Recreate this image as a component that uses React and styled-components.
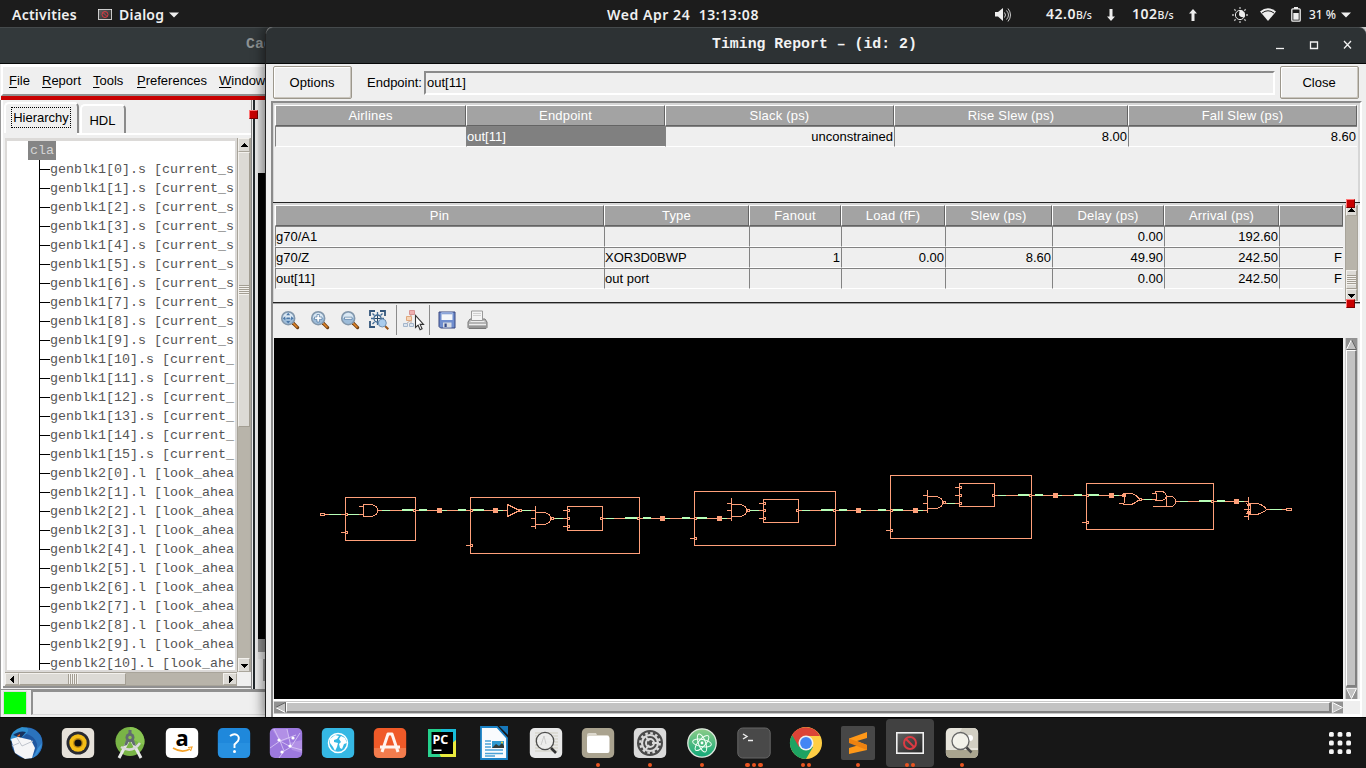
import React from 'react';
import styled, { createGlobalStyle, css } from 'styled-components';

const Global = createGlobalStyle`
  * { box-sizing: border-box; }
  body { margin: 0; background: #000; overflow: hidden; }
  svg { display: block; flex: none; }
`;

const sans = '"Liberation Sans", Arial, sans-serif';
const mono = '"Liberation Mono", "Courier New", monospace';
const shell = '"Noto Sans", "Open Sans", sans-serif';

const Desktop = styled.div`
  width: 1366px;
  height: 768px;
  display: grid;
  grid-template-rows: 27px 690px 51px;
  font: 13px ${sans};
  color: #000;
  overflow: hidden;
`;

/* ---------- top bar ---------- */
const TopBar = styled.header`
  display: grid;
  grid-template-columns: 607px 1fr 371px;
  background: #1c1c1c;
  color: #f0f0f0;
  font: 600 14px/27px ${shell};
  white-space: pre;
`;
const BarGroup = styled.div`
  display: flex;
  align-items: center;
  padding-left: ${p => p.$pad || 0}px;
`;
const BarText = styled.span`
  width: ${p => p.$w}px;
  margin-right: ${p => p.$gap || 0}px;
  font-size: ${p => p.$size || 14}px;
  font-weight: ${p => p.$weight || 600};
  letter-spacing: ${p => p.$ls || 0}px;
  flex: none;
  small { font-size: 10.5px; font-weight: 500; letter-spacing: 0; }
`;
const Gap = styled.i`
  width: ${p => p.$w}px;
  flex: none;
`;

/* ---------- windows ---------- */
const Workspace = styled.main`
  position: relative;
  background: #efefef;
  overflow: hidden;
`;
const WindowFrame = styled.section`
  position: absolute;
  top: 0;
  left: ${p => p.$x}px;
  width: ${p => p.$w}px;
  height: 690px;
  display: flex;
  flex-direction: column;
  background: #efefef;
  ${p => p.$front && css`
    border-left: 1px solid #222;
    border-radius: 7px 7px 0 0;
    box-shadow: -1px 0 12px 1px rgba(0, 0, 0, .5);
  `}
`;
const TitleBar = styled.div`
  height: 37px;
  flex: none;
  display: flex;
  align-items: center;
  position: relative;
  padding-left: ${p => p.$pad}px;
  background: ${p => (p.$front ? '#2d3234' : '#33393b')};
  color: ${p => (p.$front ? '#f3f3f3' : '#8d9293')};
  border-top: 1px solid #454a4c;
  border-bottom: 1px solid #060808;
  border-radius: ${p => (p.$front ? '7px 7px 0 0' : 0)};
  font: bold 14.85px/33px ${mono};
  padding-bottom: 2px;
  white-space: pre;
`;
const WindowButtons = styled.div`
  margin-left: auto;
  margin-right: 13px;
`;

/* ---------- main window ---------- */
const MenuBar = styled.nav`
  height: 32px;
  flex: none;
  margin-left: 1px;
  padding: 4px 0 0 6px;
  border: solid;
  border-width: 3px 0 2px 2px;
  border-color: #fff #fff #909090 #fff;
  display: flex;
  font-size: 13px;
  line-height: 19px;
`;
const MenuItem = styled.span`
  width: ${p => p.$w}px;
  flex: none;
  white-space: nowrap;
  u { text-underline-offset: 2px; }
`;
const RedRule = styled.div`
  height: 4px;
  flex: none;
  margin-left: 1px;
  background: #c80000;
`;
const Columns = styled.div`
  flex: none;
  height: 589px;
  display: flex;
  border-left: 1px solid #999;
`;
const SidePane = styled.div`
  width: 251px;
  flex: none;
  display: flex;
  flex-direction: column;
  border-left: 2px solid #fff;
  border-right: 1px solid #888;
`;
const TabRow = styled.div`
  height: 35px;
  flex: none;
  display: flex;
  align-items: flex-end;
  padding-bottom: 2px;
  background: linear-gradient(#fff, #fff) 74px 33px / 175px 2px no-repeat;
`;
const Tab = styled.div`
  width: ${p => p.$w}px;
  height: ${p => (p.$on ? 31 : 29)}px;
  padding-top: ${p => (p.$on ? 3 : 4)}px;
  padding-right: 1px;
  margin-left: 1px;
  display: flex;
  justify-content: center;
  border: 2px solid #fff;
  border-right-color: #8b8b8b;
  border-bottom: 0;
  border-radius: 5px 5px 0 0;
  font-size: 13px;
  line-height: 20px;
  span {
    height: 21px;
    padding: 0 1px;
    border: 1px dotted ${p => (p.$on ? '#000' : 'transparent')};
    line-height: 19px;
  }
`;
const TreeGrid = styled.div`
  display: grid;
  grid-template: 534px 14px / 232px 14px;
  margin: 3px 0 0 2px;
  height: 548px;
  flex: none;
`;
const TreeView = styled.div`
  background: #fff;
  border: 2px solid #dcdad8;
  border-top-width: 3px;
  overflow: hidden;
  font: 13.33px/19px ${mono};
  color: #555;
  white-space: pre;
`;
const TreeRoot = styled.div`
  width: 28px;
  height: 19px;
  margin-left: 21px;
  padding-left: 2px;
  background: #858585;
  color: #d4d4d4;
`;
const TreeItem = styled.div`
  height: 19px;
  margin-left: 32px;
  padding-left: 10px;
  border-left: 1px solid #000;
  background: linear-gradient(#000, #000) 0 9px / 10px 1px no-repeat;
  overflow: hidden;
`;
const PaneFoot = styled.div`
  height: 3px;
  margin-top: auto;
  border-top: 2px solid #909090;
`;
const BackPane = styled.div`
  width: 14px;
  flex: none;
  display: flex;
  flex-direction: column;
  margin-left: 1px;
  border-left: 2px solid #22282c;
  padding-left: 3px;
`;
const BackBlock = styled.div`
  height: ${p => p.$h}px;
  flex: none;
  background: ${p => p.$bg};
  margin-left: ${p => p.$ml || 0}px;
`;
const Handle = styled.i`
  position: absolute;
  left: ${p => p.$x}px;
  top: ${p => p.$y}px;
  width: 9px;
  height: 9px;
  background: #c80000;
  border: 1px solid;
  border-color: #ff7777 #780000 #780000 #ff7777;
`;
const StatusBar = styled.div`
  height: 28px;
  flex: none;
  display: flex;
  border-left: 1px solid #999;
  border-top: 1px solid #909090;
  padding: 0 0 0 2px;
`;
const Led = styled.div`
  width: 24px;
  height: 24px;
  margin-top: 1px;
  background: #0f0;
  border: 1px solid #dcdcdc;
`;
const StatusField = styled.div`
  flex: 1;
  height: 25px;
  margin-left: 4px;
  border: 2px solid #909090;
  border-bottom: 1px solid #d8d8d8;
`;

/* ---------- scroll bars ---------- */
const Bar = styled.div`
  display: flex;
  flex-direction: ${p => (p.$v ? 'column' : 'row')};
  width: ${p => p.$w}px;
  height: ${p => p.$h}px;
  flex: none;
  background: ${p => (p.$gray ? '#c3c3c3' : '#b8b4aa')};
  border: 1px solid ${p => (p.$gray ? '#c9c9c9' : '#a8a49a')};
  border-${p => (p.$v ? 'top' : 'left')}: 0;
  border-${p => (p.$v ? 'bottom' : 'right')}: 0;
`;
const Thumb = styled.div`
  flex: 0 0 ${p => p.$len}px;
  display: flex;
  align-items: center;
  justify-content: center;
  background: ${p => (p.$gray ? '#c3c3c3' : '#dcdad5')};
  border: solid;
  border-width: ${p => (p.$gray ? '1px 2px 2px 1px' : '1px')};
  border-color: ${p => (p.$gray ? '#fff #808080 #808080 #fff' : '#f3f1ed #a39e93 #a39e93 #f3f1ed')};
`;
const Grip = styled.i`
  width: ${p => (p.$v ? 10 : 10)}px;
  height: ${p => (p.$v ? 10 : 10)}px;
  background: repeating-linear-gradient(${p => (p.$v ? '180deg' : '90deg')}, #a39e93 0 1px, #f3f1ed 1px 2px);
`;
const Arrow = styled.div`
  flex: 0 0 ${p => p.$len || 14}px;
  display: flex;
  align-items: center;
  justify-content: center;
  background: ${p => (p.$gray ? '#929292' : '#dcdad5')};
  border: ${p => (p.$gray ? 0 : '1px solid #aaa69c')};
  border-top-color: #f3f1ed;
  border-left-color: #f3f1ed;
  overflow: hidden;
`;
const Spacer = styled.div`
  flex: 1;
`;

const DIR = { up: 0, right: 90, down: 180, left: 270 };
const SmallArrow = ({ dir, len }) => (
  <Arrow $len={len}>
    <svg width="7" height="7" viewBox="0 0 7 7" shapeRendering="crispEdges">
      <path transform={`rotate(${DIR[dir]} 3.5 3.5)`} d="M3 1h1v1h1v1h1v1h1v1H0V4h1V3h1V2h1z" />
    </svg>
  </Arrow>
);
const MotifArrow = ({ dir }) => (
  <Arrow $gray $len={12}>
    <svg width="11" height="11" viewBox="0 0 11 11">
      <g transform={`rotate(${DIR[dir]} 5.5 5.5)`}>
        <path d="M5.5 .5L10.5 10.5H.5z" fill="#c3c3c3" />
        <path d="M5.5 .5L.5 10.5" stroke="#fff" fill="none" />
        <path d="M5.5 .5L10.5 10.5H.5" stroke={dir === 'right' || dir === 'down' ? '#eee' : '#666'} fill="none" />
      </g>
    </svg>
  </Arrow>
);

/* ---------- dialog ---------- */
const Controls = styled.div`
  height: 37px;
  flex: none;
  display: flex;
  padding: 2px 7px 0;
`;
const Button = styled.button`
  width: 79px;
  height: 33px;
  flex: none;
  padding: 0 1px 0 0;
  border: 1px solid #9c978c;
  border-radius: 2px;
  box-shadow: inset -1px -1px #c9c5bd, inset 1px 1px #fff;
  background: #efefef;
  font: 13px ${sans};
`;
const FieldLabel = styled.label`
  width: 57px;
  margin-left: 15px;
  line-height: 33px;
  white-space: nowrap;
`;
const Field = styled.div`
  flex: 1;
  height: 24px;
  margin: 5px 5px 0 0;
  padding-left: 1px;
  border: 2px solid #8b8b8b;
  border-right-color: #fff;
  border-bottom-color: #fff;
  line-height: 19px;
`;
const Content = styled.div`
  width: 1091px;
  height: 616px;
  margin-left: 5px;
  flex: none;
  position: relative;
  border: 2px solid #8b8b8b;
  border-right-color: #fff;
  border-bottom: 0;
  display: flex;
  flex-direction: column;
`;
const Panel = styled.div`
  height: 99px;
  flex: none;
  display: flex;
  padding-left: 1px;
  border: solid #d6d6d6;
  border-width: 2px ${p => (p.$last ? 0 : 2)}px 0 1px;
  overflow: hidden;
`;
const Splitter = styled.div`
  height: ${p => p.$h || 1}px;
  flex: none;
  background: #222;
  border-bottom: ${p => (p.$h === 2 ? '1px solid #a0a0a0' : 0)};
`;
const Table = styled.div`
  display: grid;
  grid-template-columns: ${p => p.$cols};
  grid-auto-rows: 21px;
  align-content: start;
`;
const Th = styled.div`
  background: #a3a3a3;
  color: #fff;
  text-align: center;
  border: 1px solid #fff;
  border-right: 1px solid #646464;
  border-bottom-color: #646464;
  line-height: 20px;
  letter-spacing: .2px;
`;
const Td = styled.div`
  padding-right: 1px;
  text-align: ${p => (p.$right ? 'right' : 'left')};
  border-top: 1px solid #828282;
  border-left: 1px solid #828282;
  border-bottom: 1px solid #fff;
  background: ${p => (p.$sel ? '#808080' : '#efefef')};
  color: ${p => (p.$sel ? '#fff' : '#000')};
  line-height: 19px;
  white-space: nowrap;
`;
const ToolBar = styled.div`
  height: 34px;
  flex: none;
  display: flex;
  align-items: flex-start;
  padding: 1px 0 0 4px;
`;
const Tool = styled.div`
  width: ${p => p.$w || 30}px;
  height: 30px;
  display: flex;
  align-items: center;
  justify-content: center;
`;
const Separator = styled.i`
  width: 1px;
  height: 30px;
  background: #8b8b8b;
`;
const CanvasRow = styled.div`
  display: flex;
  padding-left: 1px;
  height: 361px;
  flex: none;
`;
const Canvas = styled.div`
  width: 1069px;
  height: 361px;
  background: #000;
  margin-right: 2px;
`;
const BottomRow = styled.div`
  height: 18px;
  flex: none;
  padding: 0 0 0 1px;
  border-top: 2px solid #fff;
  border-bottom: 3px solid #fff;
`;

/* ---------- dock ---------- */
const Dock = styled.footer`
  background: #171717;
  border-top: 1px solid #050505;
  display: flex;
  align-items: flex-start;
  padding: 1px 2px 0 0;
`;
const DockItem = styled.div`
  width: 48px;
  height: 48px;
  margin: 0 2px;
  padding-top: 6px;
  display: flex;
  flex-direction: column;
  align-items: center;
  border-radius: 4px;
  background: ${p => (p.$on ? '#414141' : 'none')};
`;
const Dots = styled.div`
  display: flex;
  gap: 2.2px;
  margin-top: 2px;
  i { width: 4.4px; height: 4.4px; border-radius: 50%; background: #e95420; }
`;
const AppGrid = styled.div`
  margin: 12px 12px 0 auto;
`;

/* ---------- toolbar icons ---------- */
const Lens = ({ kind }) => (
  <svg width="20" height="20" viewBox="0 0 20 20">
    <path d="M13 13l4.600 4.600" stroke="#6b3a0e" strokeWidth="3.200" strokeLinecap="round" />
    <path d="M13 13l4 4" stroke="#e0862a" strokeWidth="1.700" strokeLinecap="round" />
    <circle cx="8.200" cy="8.200" r="6.500" fill="#9dbcd9" stroke="#8397ab" strokeWidth="1.500" />
    <path d="M3 8a5.200 5.200 0 0 1 10.400 0z" fill="#dbe8f3" />
    {kind === 'fit' && <path d="M8.200 2.800l2 2.500H6.200zM8.200 13.600l2-2.500h-4zM2.800 8.200l2.500-2v4zM13.600 8.200l-2.500-2v4zM6.500 7.500h3.400v1.500H6.500z" fill="#4a76a6" />}
    {kind === 'in' && <path d="M7 4.500h2.400V7H12v2.400H9.400V12H7V9.400H4.500V7H7z" fill="#fff" stroke="#3b6694" strokeWidth=".6" />}
    {kind === 'out' && <path d="M4.500 7.200h7.600v2.100H4.500z" fill="#fff" stroke="#3b6694" strokeWidth=".6" />}
  </svg>
);
const ZoomArea = () => (
  <svg width="22" height="22" viewBox="0 0 22 22">
    <path d="M2 7V2h5M12 2h5v5M2 12v6h5" fill="none" stroke="#33567b" strokeWidth="1.800" />
    <path d="M9.500 3v13M3 9.500h13M4.500 4.500l2 2M14.500 4.500l-2 2M4.500 15l2-2" stroke="#416c96" strokeWidth="1.300" />
    <circle cx="9.500" cy="9.500" r="3.500" fill="#efefef" stroke="#416c96" strokeWidth="1.300" />
    <path d="M9.500 6.500v6M6.500 9.500h6" stroke="#264767" />
    <path d="M17 17l3.300 3.300" stroke="#9b5518" strokeWidth="2" />
    <circle cx="14.300" cy="14" r="4" fill="#a9cced" stroke="#7292b3" />
  </svg>
);
const Hierarchy = () => (
  <svg width="24" height="24" viewBox="0 0 24 24">
    <path d="M10 5v3M10 12L5 16M10 12v4M10 8h-1" stroke="#c0a79d" fill="none" />
    <path d="M8.500 2.500h5v4h-5z" fill="#eeb0b0" stroke="#d89494" />
    <path d="M5.500 8.500h5v4h-5z" fill="#f6d4b5" stroke="#dfa77d" />
    <path d="M2.500 15.500h4v3h-4zM8.500 15.500h4v3h-4z" fill="#dce4ee" stroke="#a4b6cb" />
    <path d="M14.500 7.500v12l2.600-2.300 2 4.600 2-1-2-4.400h3.400z" fill="#fff" stroke="#333" strokeWidth="1.100" />
  </svg>
);
const Floppy = () => (
  <svg width="18" height="18" viewBox="0 0 18 18">
    <path d="M1 1h16v16H2.500L1 15.500z" fill="#6f8dce" stroke="#39477f" strokeWidth="1" />
    <path d="M3.500 1.500h11V9h-11z" fill="#f5f7fa" />
    <path d="M3.500 1.300h11v2h-11z" fill="#8aa4d8" />
    <path d="M5 11.500h8.500v5H5z" fill="#d6dae2" />
    <path d="M6.500 12.500h2.200v3.500H6.500z" fill="#334a8c" />
  </svg>
);
const Printer = () => (
  <svg width="21" height="20" viewBox="0 0 21 20">
    <path d="M3 9h15l2 3v5.500l-1 1H2l-1-1V12z" fill="#b5b5b5" stroke="#777" />
    <path d="M4.500 1h11v9.500h-11z" fill="#f4f4f4" stroke="#999" />
    <path d="M6 3.500h8M6 5.500h8" stroke="#d0d0d0" />
    <path d="M3.500 11.500h14M2 14.500h17" stroke="#ededed" />
    <path d="M2 17h17" stroke="#777" />
  </svg>
);

/* ---------- schematic ---------- */
const S = '#ffa07a';
const G = '#b8ffb8';
const Stub = ({ x, y }) => (
  <>
    <path d={`M${x - 4} ${y}.5h4`} />
    <rect x={x + .5} y={y - .5} width="2" height="2" />
  </>
);
const Nodes = ({ at }) => at.map(([x, y]) => <rect key={x} x={x} y={y} width="5" height="5" fill={S} stroke="none" />);
const Thin = ({ at }) => at.map(([x, y, w]) => <rect key={x} x={x} y={y} width={w} height="1" fill={G} stroke="none" />);
const Thick = ({ at }) => at.map(([x, y, w]) => <rect key={x} x={x} y={y - 1} width={w} height="2" fill={G} stroke="none" />);
const Box = ({ x1, y1, x2, y2 }) => <rect x={x1 + .5} y={y1 + .5} width={x2 - x1} height={y2 - y1} />;
const Pin = ({ x, y }) => <rect x={x + .5} y={y - .5} width="2" height="2" fill="#000" />;
const Nand = ({ x, y, stubs }) => (
  <>
    <path d={`M${x}.5 ${y - 12}v23`} />
    <path d={`M${x}.5 ${y - 5.5}h9q6 1 6 6q0 5 -6 6h-9`} />
    {stubs.map(s => <path key={s} d={`M${x - 4} ${s}.5h4`} />)}
    <Pin x={x + 16} y={y} />
  </>
);

const Schematic = () => (
  <svg width="1069" height="361" viewBox="274 338 1069 361" fill="none" stroke={S} strokeWidth="1" shapeRendering="crispEdges">
    <rect x="320.500" y="513.500" width="4" height="2" />
    <path d="M325 514.500H363M359 506.500h4M378 510.500H507M522 510.500H536M554 518.500H567M603 518.500H731M749 510.500H763M799 510.500H927M945 503.500H959M995 495.500H1124M1142 499.500H1157M1176 501.500H1248M1267 509.500H1286" />
    <Box x1={345} y1={497} x2={415} y2={540} />
    <Box x1={470} y1={497} x2={639} y2={553} />
    <Box x1={694} y1={491} x2={835} y2={545} />
    <Box x1={890} y1={475} x2={1031} y2={538} />
    <Box x1={1086} y1={483} x2={1213} y2={529} />
    <Stub x={345} y={532} /><Stub x={470} y={545} /><Stub x={694} y={538} /><Stub x={890} y={530} /><Stub x={1086} y={522} />
    <path d="M363.500 504.500h8q6 1 6 6q0 5 -6 6h-8z" />
    <path d="M507.500 504.500v12l12 -6z" />
    <Pin x={519} y={510} />
    <Nand x={535} y={518} stubs={[518, 526]} />
    <Nand x={731} y={510} stubs={[503, 510, 518]} />
    <Nand x={927} y={502} stubs={[495, 503, 510]} />
    <Box x1={567} y1={506} x2={602} y2={530} />
    <Stub x={567} y={510} /><Stub x={567} y={518} /><Stub x={567} y={526} />
    <Box x1={763} y1={499} x2={798} y2={522} />
    <Stub x={763} y={503} /><Stub x={763} y={510} /><Stub x={763} y={518} />
    <Box x1={959} y1={483} x2={994} y2={506} />
    <Stub x={959} y={487} /><Stub x={959} y={495} /><Stub x={959} y={503} />
    <Thin at={[[329, 514, 12], [347, 514, 12], [382, 510, 8], [442, 510, 5], [498, 510, 5], [522, 510, 9], [555, 518, 8], [606, 518, 8], [665, 518, 5], [722, 518, 5], [750, 510, 9], [802, 510, 8], [861, 510, 5], [918, 510, 5], [947, 503, 8], [998, 495, 8], [1058, 495, 4], [1114, 495, 5], [1144, 499, 8], [1180, 501, 8], [1239, 501, 5], [1270, 509, 12]]} />
    <Thick at={[[402, 510, 12], [419, 510, 8], [458, 510, 8], [472, 510, 12], [625, 518, 12], [643, 518, 8], [682, 518, 8], [696, 518, 11], [821, 510, 12], [839, 510, 8], [878, 510, 8], [892, 510, 11], [1018, 495, 12], [1035, 495, 8], [1074, 495, 8], [1088, 495, 11], [1199, 501, 12], [1217, 501, 8]]} />
    <Nodes at={[[437, 508], [493, 508], [660, 516], [717, 516], [856, 508], [913, 508], [1053, 493], [1109, 493], [1234, 499]]} />
    <Pin x={345} y={514} /><Pin x={413} y={510} /><Pin x={637} y={518} /><Pin x={600} y={518} /><Pin x={796} y={510} /><Pin x={833} y={510} /><Pin x={992} y={495} /><Pin x={1029} y={495} /><Pin x={1211} y={501} />
    <Pin x={470} y={510} /><Pin x={694} y={518} /><Pin x={890} y={510} /><Pin x={1086} y={495} />
    <path d="M1119 503.500h5M1123.500 493.500h8q6 2 8 6q-3 3 -8 5h-8q3 -5 0 -11M1122 494.500h3v2h-3" />
    <Pin x={1139} y={499} />
    <path d="M1152 493.500h4M1155.500 491.500h7q3 1 4 5q-1 3 -4 4h-7q3 -4 0 -9M1166.500 496.500h5q4 1 4 5q0 4 -4 5h-19M1166.500 496v10" />
    <path d="M1248.500 497v23M1244 509.500h6M1244 516.500h4M1248.500 503.500h8q7 1 10 6q-4 4 -10 5h-8q4 -6 0 -11M1246.500 503.500q4 5 0 11M1250.500 503v11" />
    <rect x="1286.500" y="508.500" width="5" height="2" />
  </svg>
);

/* ---------- dock icons ---------- */
const Tile = ({ fill, stroke, children }) => (
  <svg width="34" height="34" viewBox="0 0 34 34">
    <rect x=".8" y="2" width="32.400" height="30" rx="5" fill={fill} stroke={stroke || 'none'} />
    {children}
  </svg>
);
const Thunderbird = () => (
  <svg width="34" height="34" viewBox="0 0 34 34">
    <circle cx="18" cy="17" r="15.500" fill="#1f57a0" />
    <path d="M9 7Q14-1 24 3q11 5 9 18-2 9-12 12 8-8 7-15Q25 7 9 7z" fill="#2b73bd" />
    <path d="M13 1Q2 4 1 14l5 4L18 7Q22 1 13 1z" fill="#2f8fd0" />
    <path d="M4 9q7-5 13-3l-5 6z" fill="#16315e" />
    <path d="M2 13l7-2 13 3 4 8-3 10-7 1-10-6z" fill="#f5f5f7" />
    <path d="M8 12l5 8 11-5M3 20l7-3" fill="none" stroke="#bfc4cd" />
    <path d="M11 8q-3 1-3 3l3-1z" fill="#d3631f" />
    <path d="M24 32q8-6 9-15l-4 5z" fill="#3a90d8" />
  </svg>
);
const Rhythmbox = () => (
  <Tile fill="#e6e1d9"><circle cx="17" cy="17" r="11.500" fill="#292a32" /><circle cx="17" cy="17" r="8.700" fill="#f4bd16" /><circle cx="17" cy="17" r="5" fill="#c38c10" /><circle cx="17" cy="17" r="3.600" fill="#111" /></Tile>
);
const AndroidStudio = () => (
  <svg width="34" height="34" viewBox="0 0 34 34">
    <circle cx="17" cy="15.500" r="14.500" fill="#79b446" />
    <path d="M17 1a14.500 14.500 0 0 1 14 18L17 12z" fill="#89c553" />
    <path d="M15 15L6 32M19 15l9 17" stroke="#e6e6e6" strokeWidth="3" />
    <path d="M8 21q11 7 19-4" stroke="#d9d9d9" strokeWidth="2.600" fill="none" />
    <circle cx="17" cy="11.500" r="4.500" fill="#626b70" /><circle cx="17" cy="11.500" r="1.700" fill="#8bc34a" />
    <path d="M15.500 4h3v4h-3zM13 14l-2 6 3-1 2-4zM21 14l2 6-3-1-2-4z" fill="#626b70" />
  </svg>
);
const GlyphText = styled.text`
  font-family: ${shell};
  font-weight: 700;
  font-size: ${p => p.$size}px;
  fill: ${p => p.$fill};
`;
const Amazon = () => (
  <Tile fill="#fff"><GlyphText x="17" y="20" textAnchor="middle" $size="22">a</GlyphText><path d="M8 22q9 5.500 17 1" fill="none" stroke="#f5a127" strokeWidth="1.700" /><path d="M23 21.500l4-.5-1.500 4" fill="none" stroke="#f5a127" strokeWidth="1.200" /></Tile>
);
const Help = () => (
  <Tile fill="#1f88db"><path d="M1 17h32v10q0 5-5 5H6q-5 0-5-5z" fill="#2f98e5" opacity=".5" /><path d="M13 10q4-3 7-1t1 6l-3.500 3.500v3.500" fill="none" stroke="#fff" strokeWidth="1.900" /><circle cx="17.500" cy="25.500" r="1.500" fill="#fff" /></Tile>
);
const Network = () => (
  <Tile fill="#9d79de"><path d="M3 3l15 0 2 10-9 3zM20 17l13-3v13l-10-3z" fill="#ba9aea" opacity=".7" /><path d="M1 22l10-7 11 6 9-14M11 15L5 3M11 15l4 10 7-4 11 3M11 15L27 9M15 25l-5 7M22 21l-4-18" stroke="#dccdf6" fill="none" strokeWidth=".8" /><circle cx="10" cy="14" r="1.600" fill="#fff" /><circle cx="24" cy="12" r="1.600" fill="#fff" /><circle cx="21" cy="20" r="1.600" fill="#fff" /><circle cx="13" cy="26" r="1.600" fill="#fff" /></Tile>
);
const Globe = () => (
  <Tile fill="#35b8e4"><circle cx="17" cy="17" r="9.500" fill="none" stroke="#fff" strokeWidth="1.500" /><path d="M9 13l5-4 4 1-2 3-3 1v2l4 1-1 4-2 4-2-4-3-4zM20 10l4 2 2 5-3 1-2 5-2-1-1-4 2-2-2-3z" fill="#fff" /></Tile>
);
const Software = () => (
  <Tile fill="#f05a28"><path d="M1 22h32v5q0 5-5 5H6q-5 0-5-5z" fill="#f48a5c" opacity=".7" /><path d="M9 26L15 8h4l6 18M7 21h20" fill="none" stroke="#fff5ef" strokeWidth="3" strokeLinejoin="round" /></Tile>
);
const PyCharm = () => (
  <svg width="34" height="34" viewBox="0 0 34 34">
    <path d="M3 3h28v28H3z" fill="#23d08c" /><path d="M16 3h15v15L16 31z" fill="#18bdd9" /><path d="M31 14v17H9z" fill="#eaea3d" /><path d="M3 24l8-3 5 10H3z" fill="#2bd391" />
    <path d="M6.500 6h21.500v22H6.500z" fill="#000" /><path d="M8.500 23.500h8v1.500h-8z" fill="#fff" />
    <GlyphText x="7.500" y="17.500" $size="12.500" $fill="#fff">PC</GlyphText>
  </svg>
);
const Writer = () => (
  <svg width="34" height="34" viewBox="0 0 34 34">
    <path d="M4 1h16l10 11v21H4z" fill="#f9fbfd" stroke="#1b83c7" strokeWidth="1.800" /><path d="M22 0h9v9z" fill="#1678bb" />
    <path d="M8 15h6M8 18h6M8 21h6M8 24h18M8 27.500h18M8 30h10" stroke="#4ba2d6" strokeWidth="1.300" />
    <path d="M15 15h12v7H15z" fill="#2e99d0" /><path d="M15 22l4-4 3 2 3-3 2 3v2z" fill="#323b38" /><circle cx="25" cy="16.500" r="1" fill="#f2d43a" />
  </svg>
);
const DocViewer = () => (
  <Tile fill="#e8e8e8"><path d="M6 7h23M6 10h23M6 13h23M6 16h23M6 19h23M6 22h23M6 25h23" stroke="#cfcdbf" /><circle cx="16" cy="15" r="8.700" fill="#eee" fillOpacity=".85" stroke="#4b4b4b" strokeWidth="1.300" /><path d="M22 22l5 5" stroke="#333" strokeWidth="2.600" /><path d="M12 19l3-9 2 8" stroke="#ccc" fill="none" /></Tile>
);
const Files = () => (
  <Tile fill="#aaa38f"><path d="M6 9q0-2 2-2h7l1 2h10q2 0 2 2v3H6z" fill="#dcd8cd" /><rect x="6" y="10" width="22.500" height="17" rx="2" fill="#fff" /></Tile>
);
const Settings = () => (
  <Tile fill="#dadada"><circle cx="17" cy="17" r="13" fill="#4a4a4a" /><circle cx="17" cy="17" r="8" fill="none" stroke="#dadada" strokeWidth="2.200" /><circle cx="17" cy="17" r="9.800" fill="none" stroke="#dadada" strokeWidth="2.200" strokeDasharray="2.600 2.531" /><circle cx="17" cy="17" r="4" fill="none" stroke="#dadada" strokeWidth="2" /><path d="M19 17l5 0M16 15l-3-4M16 19l-3 4" stroke="#dadada" strokeWidth="2" /></Tile>
);
const Atom = () => (
  <svg width="34" height="34" viewBox="0 0 34 34">
    <defs><linearGradient id="atom" x1="0" y1="0" x2="0" y2="1"><stop offset="0" stopColor="#8dcc88" /><stop offset="1" stopColor="#10a878" /></linearGradient></defs>
    <circle cx="17" cy="17" r="14.200" fill="url(#atom)" stroke="#dfe8df" strokeWidth="1.300" />
    <g fill="none" stroke="#f0fff4" strokeWidth="1"><ellipse cx="17" cy="17" rx="3.600" ry="9.500" transform="rotate(-20 17 17)" /><ellipse cx="17" cy="17" rx="3.600" ry="9.500" transform="rotate(42 17 17)" /><ellipse cx="17" cy="17" rx="3.600" ry="9.500" transform="rotate(100 17 17)" /></g><circle cx="17" cy="17" r="1.400" fill="#fff" />
  </svg>
);
const Terminal = () => (
  <Tile fill="#494949" stroke="#666"><path d="M6 8l4 2.500-4 2.500M11 14.500h5" fill="none" stroke="#eee" strokeWidth="1.400" /></Tile>
);
const Chrome = () => (
  <svg width="34" height="34" viewBox="0 0 34 34">
    <circle cx="17" cy="17" r="16" fill="#ffce44" />
    <path d="M17 17L3.100 9A16 16 0 0 0 17 33l7-12z" fill="#1da362" />
    <path d="M3.100 9A16 16 0 0 1 31 10H17l-7 11z" fill="#dc4437" />
    <circle cx="17" cy="17" r="7.500" fill="#f1f1f1" /><circle cx="17" cy="17" r="5.900" fill="#4385f4" />
  </svg>
);
const Sublime = () => (
  <svg width="34" height="34" viewBox="0 0 34 34"><rect width="34" height="34" rx="2" fill="#474747" /><path d="M8 12.500L26 6v6L16 15l10 4v5L8 28v-6l10-3-10-3z" fill="#ff9818" /><path d="M8 12.500L26 19v5L8 17z" fill="#ee8210" /></svg>
);
const DialogIcon = ({ w = 28, h = 22 }) => (
  <svg width={w} height={h} viewBox="0 0 28 22">
    <defs><linearGradient id="dlg" x1="0" y1="0" x2="1" y2="1"><stop offset="0" stopColor="#626262" /><stop offset="1" stopColor="#252525" /></linearGradient></defs>
    <rect x=".8" y=".8" width="26.400" height="20.400" fill="url(#dlg)" stroke="#f1f1f1" strokeWidth="1.600" />
    <circle cx="14" cy="11" r="6" fill="none" stroke="#dc3b43" strokeWidth="2" /><path d="M10 7l8 8" stroke="#dc3b43" strokeWidth="2" />
  </svg>
);
const ImageViewer = () => (
  <Tile fill="#e7e5dc"><path d="M17 2h11q5 0 5 5v15H8z" fill="#d2cfc3" /><path d="M1 24h32v3q0 5-5 5H6q-5 0-5-5z" fill="#aaa58f" /><circle cx="25" cy="12" r="3" fill="#fff" /><circle cx="15.500" cy="15" r="8.500" fill="#f6f5ee" fillOpacity=".9" stroke="#666" strokeWidth="1.300" /><path d="M21.500 21.500l5 5" stroke="#444" strokeWidth="2.500" /></Tile>
);

const DOCK = [
  [Thunderbird, 0], [Rhythmbox, 0], [AndroidStudio, 0], [Amazon, 0], [Help, 0], [Network, 0], [Globe, 0],
  [Software, 0], [PyCharm, 0], [Writer, 0], [DocViewer, 0], [Files, 1], [Settings, 1], [Atom, 1],
  [Terminal, 3], [Chrome, 2], [Sublime, 1], [DialogIcon, 2, true], [ImageViewer, 1],
];
const IconBox = styled.div`
  height: 36px;
  display: flex;
  align-items: center;
`;

/* ---------- data ---------- */
const TREE = [
  ...Array.from({ length: 16 }, (_, i) => `genblk1[${i}].s [current_state]`),
  ...Array.from({ length: 11 }, (_, i) => `genblk2[${i}].l [look_ahead]`),
].map(t => t.slice(0, 23));

const PATH_HEAD = ['Pin', 'Type', 'Fanout', 'Load (fF)', 'Slew (ps)', 'Delay (ps)', 'Arrival (ps)', ''];
const PATH_ROWS = [
  ['g70/A1', '', '', '', '', '0.00', '192.60', ''],
  ['g70/Z', 'XOR3D0BWP', '1', '0.00', '8.60', '49.90', '242.50', 'F'],
  ['out[11]', 'out port', '', '', '', '0.00', '242.50', 'F'],
];
const END_HEAD = ['Airlines', 'Endpoint', 'Slack (ps)', 'Rise Slew (ps)', 'Fall Slew (ps)'];
const END_ROW = ['', 'out[11]', 'unconstrained', '8.00', '8.60'];
const MENU = [['File', 33], ['Report', 51], ['Tools', 44], ['Preferences', 82], ['Window', 60]];

const Caret = () => <svg width="10" height="6" viewBox="0 0 10 6"><path d="M0 .5h10L5 5.500z" fill="#eee" /></svg>;
const NetArrow = ({ up }) => (
  <svg width="8" height="12" viewBox="0 0 8 12"><path transform={up ? '' : 'rotate(180 4 6)'} d="M4 0l4 4.500H5.500V12H2.500V4.500H0z" fill="#eee" /></svg>
);

export default function App() {
  return (
    <Desktop>
      <Global />
      <TopBar>
        <BarGroup $pad={12}>
          <BarText $w={86} $ls={.25}>Activities</BarText>
          <DialogIcon w={14} h={11} />
          <Gap $w={7} />
          <BarText $w={50} $ls={.25}>Dialog</BarText>
          <Caret />
        </BarGroup>
        <BarGroup><BarText $w={200} $ls={.57}>Wed Apr 24  13:13:08</BarText></BarGroup>
        <BarGroup>
          <svg width="16" height="16" viewBox="0 0 16 16">
            <path d="M0 5h3L8 1v13l-5-4.500H0z" fill="#eee" />
            <path d="M9.500 5.500q2 2.500 0 5M11.500 3.500q4 4.500 0 9M13 1.500q5 6.500 0 13" fill="none" stroke="#ccc" strokeWidth="1" />
          </svg>
          <Gap $w={35} />
          <BarText $w={48} $gap={13} $ls={.5}>42.0<small>B/s</small></BarText>
          <NetArrow />
          <Gap $w={17} />
          <BarText $w={43} $gap={14} $ls={.5}>102<small>B/s</small></BarText>
          <NetArrow up />
          <Gap $w={35} />
          <svg width="16" height="16" viewBox="0 0 16 16">
            <path d="M8 0v2M8 14v2M0 8h2M14 8h2M2.300 2.300l1.400 1.400M12.300 12.300l1.400 1.400M2.300 13.700l1.400-1.400M12.300 3.700l1.400-1.400" stroke="#bbb" strokeWidth="1.300" />
            <circle cx="8" cy="8" r="4.600" fill="none" stroke="#eee" /><path d="M8 3a5 5 0 0 1 4.500 7Q8 11 7 7.500 7 5 8 3z" fill="#eee" />
          </svg>
          <Gap $w={12} />
          <svg width="16" height="13" viewBox="0 0 16 13"><path d="M0 3.500Q8-3 16 3.500L8 13z" fill="#eee" /><path d="M2 5q6-4.500 12 0" stroke="#1c1c1c" fill="none" /></svg>
          <Gap $w={15} />
          <svg width="10" height="15" viewBox="0 0 10 15"><path d="M3 0h4v2H3z" fill="#eee" /><rect x=".8" y="1.800" width="8.400" height="12.400" rx="1" fill="none" stroke="#eee" strokeWidth="1.300" /><path d="M2.300 6h5.400v6.700H2.300z" fill="#eee" /></svg>
          <Gap $w={8} />
          <BarText $w={32} $size={12} $weight={500}>31 %</BarText>
          <Caret />
        </BarGroup>
      </TopBar>

      <Workspace>
        <WindowFrame $x={0} $w={290}>
          <TitleBar $pad={246}>Cadence</TitleBar>
          <MenuBar>{MENU.map(([t, w]) => <MenuItem key={t} $w={w}><u>{t[0]}</u>{t.slice(1)}</MenuItem>)}</MenuBar>
          <RedRule />
          <Columns>
            <SidePane>
              <TabRow>
                <Tab $w={75} $on><span>Hierarchy</span></Tab>
                <Tab $w={46}><span>HDL</span></Tab>
              </TabRow>
              <TreeGrid>
                <TreeView>
                  <TreeRoot>cla</TreeRoot>
                  {TREE.map(t => <TreeItem key={t}>{t}</TreeItem>)}
                </TreeView>
                <Bar $v $h={534}>
                  <SmallArrow dir="up" />
                  <Thumb $len={275}><Grip $v /></Thumb>
                  <Spacer />
                  <SmallArrow dir="down" />
                </Bar>
                <Bar>
                  <SmallArrow dir="left" />
                  <Thumb $len={107}><Grip /></Thumb>
                  <Spacer />
                  <SmallArrow dir="right" />
                </Bar>
              </TreeGrid>
              <PaneFoot />
            </SidePane>
            <BackPane>
              <BackBlock $h={73} $bg="#e4e4e4" />
              <BackBlock $h={466} $bg="#000" />
              <BackBlock $h={13} $bg="#929292" />
              <BackBlock $h={7} $bg="#e4e4e4" />
              <BackBlock $h={22} $bg="#999" $ml={5} />
            </BackPane>
          </Columns>
          <StatusBar><Led /><StatusField /></StatusBar>
          <Handle $x={249} $y={83} />
        </WindowFrame>

        <WindowFrame $front $x={265} $w={1101}>
          <TitleBar $front $pad={446}>
            Timing Report – (id: 2)
            <WindowButtons>
              <svg width="80" height="12" viewBox="0 0 80 12" fill="none" stroke="#f2f2f2" strokeWidth="1.300">
                <path d="M3 9.500h8" /><path d="M37.500 3h7v6.500h-7z" /><path d="M71 2l7 7.500M78 2l-7 7.500" />
              </svg>
            </WindowButtons>
          </TitleBar>
          <Controls>
            <Button>Options</Button>
            <FieldLabel>Endpoint:</FieldLabel>
            <Field>out[11]</Field>
            <Button>Close</Button>
          </Controls>
          <Content>
            <Panel>
              <Table $cols="191px 199px 229px 234px 229px">
                {END_HEAD.map(t => <Th key={t}>{t}</Th>)}
                {END_ROW.map((t, i) => <Td key={i} $right={i > 1} $sel={i === 1}>{t}</Td>)}
              </Table>
            </Panel>
            <Splitter />
            <Panel $last>
              <Table $cols="329px 145px 92px 104px 107px 112px 115px 64px">
                {PATH_HEAD.map((t, i) => <Th key={i}>{t}</Th>)}
                {PATH_ROWS.flatMap((r, j) => r.map((t, i) => <Td key={`${j}-${i}`} $right={i > 1}>{t}</Td>))}
              </Table>
              <Gap $w={2} />
              <Bar $v $w={13} $h={96}>
                <SmallArrow dir="up" len={11} />
                <Spacer />
                <Thumb $len={19}><Grip $v /></Thumb>
                <SmallArrow dir="down" len={12} />
              </Bar>
            </Panel>
            <Splitter $h={2} />
            <ToolBar>
              <Tool $w={25}><Lens kind="fit" /></Tool>
              <Tool $w={35}><Lens kind="in" /></Tool>
              <Tool $w={25}><Lens kind="out" /></Tool>
              <Tool $w={34}><ZoomArea /></Tool>
              <Separator />
              <Tool $w={32}><Hierarchy /></Tool>
              <Separator />
              <Tool $w={33}><Floppy /></Tool>
              <Tool $w={28}><Printer /></Tool>
            </ToolBar>
            <CanvasRow>
              <Canvas><Schematic /></Canvas>
              <Bar $v $gray $w={13} $h={361}>
                <MotifArrow dir="up" /><Thumb $gray $len={337} /><MotifArrow dir="down" />
              </Bar>
            </CanvasRow>
            <BottomRow>
              <Bar $gray $w={1069} $h={13}>
                <MotifArrow dir="left" /><Thumb $gray $len={1045} /><MotifArrow dir="right" />
              </Bar>
            </BottomRow>
            <Handle $x={1073} $y={96} />
            <Handle $x={1073} $y={196} />
          </Content>
        </WindowFrame>
      </Workspace>

      <Dock>
        {DOCK.map(([Icon, dots, on], i) => (
          <DockItem key={i} $on={on}>
            <IconBox><Icon /></IconBox>
            <Dots>{Array.from({ length: dots }, (_, k) => <i key={k} />)}</Dots>
          </DockItem>
        ))}
        <AppGrid>
          <svg width="24" height="24" viewBox="0 0 24 24" fill="#f5f5f5">
            {[0, 8.6, 17.2].map(y => [0, 8.6, 17.2].map(x => <rect key={`${x}-${y}`} x={x + 1} y={y + 1} width="4.800" height="4.800" rx="1.500" />))}
          </svg>
        </AppGrid>
      </Dock>
    </Desktop>
  );
}
